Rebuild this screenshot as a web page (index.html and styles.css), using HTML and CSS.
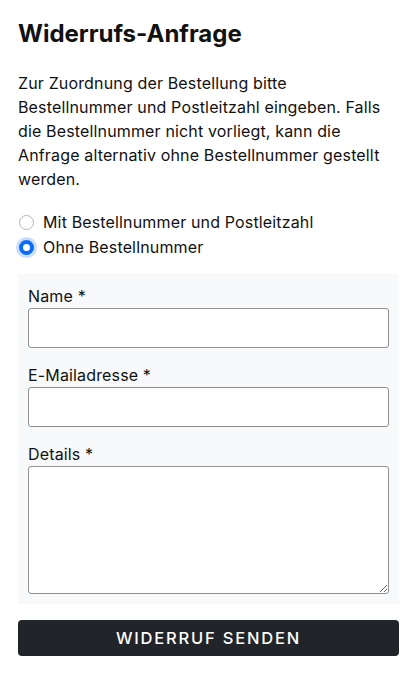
FILE: index.html
```html
<!DOCTYPE html>
<html lang="de">
<head>
    <meta charset="UTF-8">
    <meta name="viewport" content="width=device-width, initial-scale=1.0">
    <title>Widerrufs-Anfrage</title>
    <link rel="stylesheet" href="styles.css">
</head>
<body>
    <div class="page">
        <h1 class="title">Widerrufs-Anfrage</h1>
        <p class="intro">Zur Zuordnung der Bestellung bitte Bestellnummer und Postleitzahl eingeben. Falls die Bestellnummer nicht vorliegt, kann die Anfrage alternativ ohne Bestellnummer gestellt werden.</p>

        <div class="choices">
            <label class="choice">
                <input type="radio" name="mode" value="with">
                <span>Mit Bestellnummer und Postleitzahl</span>
            </label>
            <label class="choice">
                <input type="radio" name="mode" value="without" checked>
                <span>Ohne Bestellnummer</span>
            </label>
        </div>

        <form class="form-box">
            <label class="field">
                <span class="field-label">Name *</span>
                <input type="text" class="field-input" required>
            </label>
            <label class="field">
                <span class="field-label">E-Mailadresse *</span>
                <input type="email" class="field-input" required>
            </label>
            <label class="field">
                <span class="field-label">Details *</span>
                <textarea class="field-input field-area" required></textarea>
            </label>
        </form>

        <button type="button" class="send-button">Widerruf senden</button>
    </div>
</body>
</html>
```

FILE: styles.css
```css
body {
    margin: 0;
    padding: 0;
    background: #fff;
    color: #111;
    font-family: Inter, "Noto Sans", sans-serif;
    letter-spacing: 0.15px;
}

.page {
    width: 381px;
    padding: 18px 0 0 18px;
}

.title {
    margin: 0 0 21px;
    font-size: 24px;
    line-height: 32px;
    font-weight: 700;
    letter-spacing: 0;
}

.intro {
    margin: 0 0 19px;
    font-size: 16px;
    line-height: 24px;
}

.choices {
    display: flex;
    flex-direction: column;
    margin-bottom: 14px;
}

.choice {
    display: flex;
    align-items: center;
    gap: 9px;
    font-size: 16px;
    line-height: 25px;
}

/* radio drawn by hand so the checked one keeps its blue glow */
.choice input {
    appearance: none;
    box-sizing: border-box;
    width: 15px;
    height: 15px;
    margin: 0 0 0 1px;
    border: 1px solid #b5b5b5;
    border-radius: 50%;
    background: #fff;
}

.choice input:checked {
    border: 4px solid #0b6cf5;
    box-shadow: 0 0 0 3px rgba(13, 110, 253, 0.22);
}

.form-box {
    background: #f8f9fa;
    padding: 10px;
    display: flex;
    flex-direction: column;
    gap: 15px;
}

.field {
    display: flex;
    flex-direction: column;
}

.field-label {
    font-size: 16px;
    line-height: 24px;
}

.field-input {
    box-sizing: border-box;
    height: 40px;
    width: 100%;
    border: 1px solid #8f8f8f;
    border-radius: 3px;
    background: #fff;
    font: inherit;
    margin: 0;
    display: block;
}

.field-area {
    height: 128px;
    resize: vertical;
}

.send-button {
    margin-top: 16px;
    width: 100%;
    height: 36px;
    border: none;
    border-radius: 4px;
    background: #212529;
    color: #fff;
    font-family: Inter, "Noto Sans", sans-serif;
    font-size: 16.5px;
    font-weight: 500;
    letter-spacing: 1.8px;
    text-transform: uppercase;
    cursor: pointer;
}
```
